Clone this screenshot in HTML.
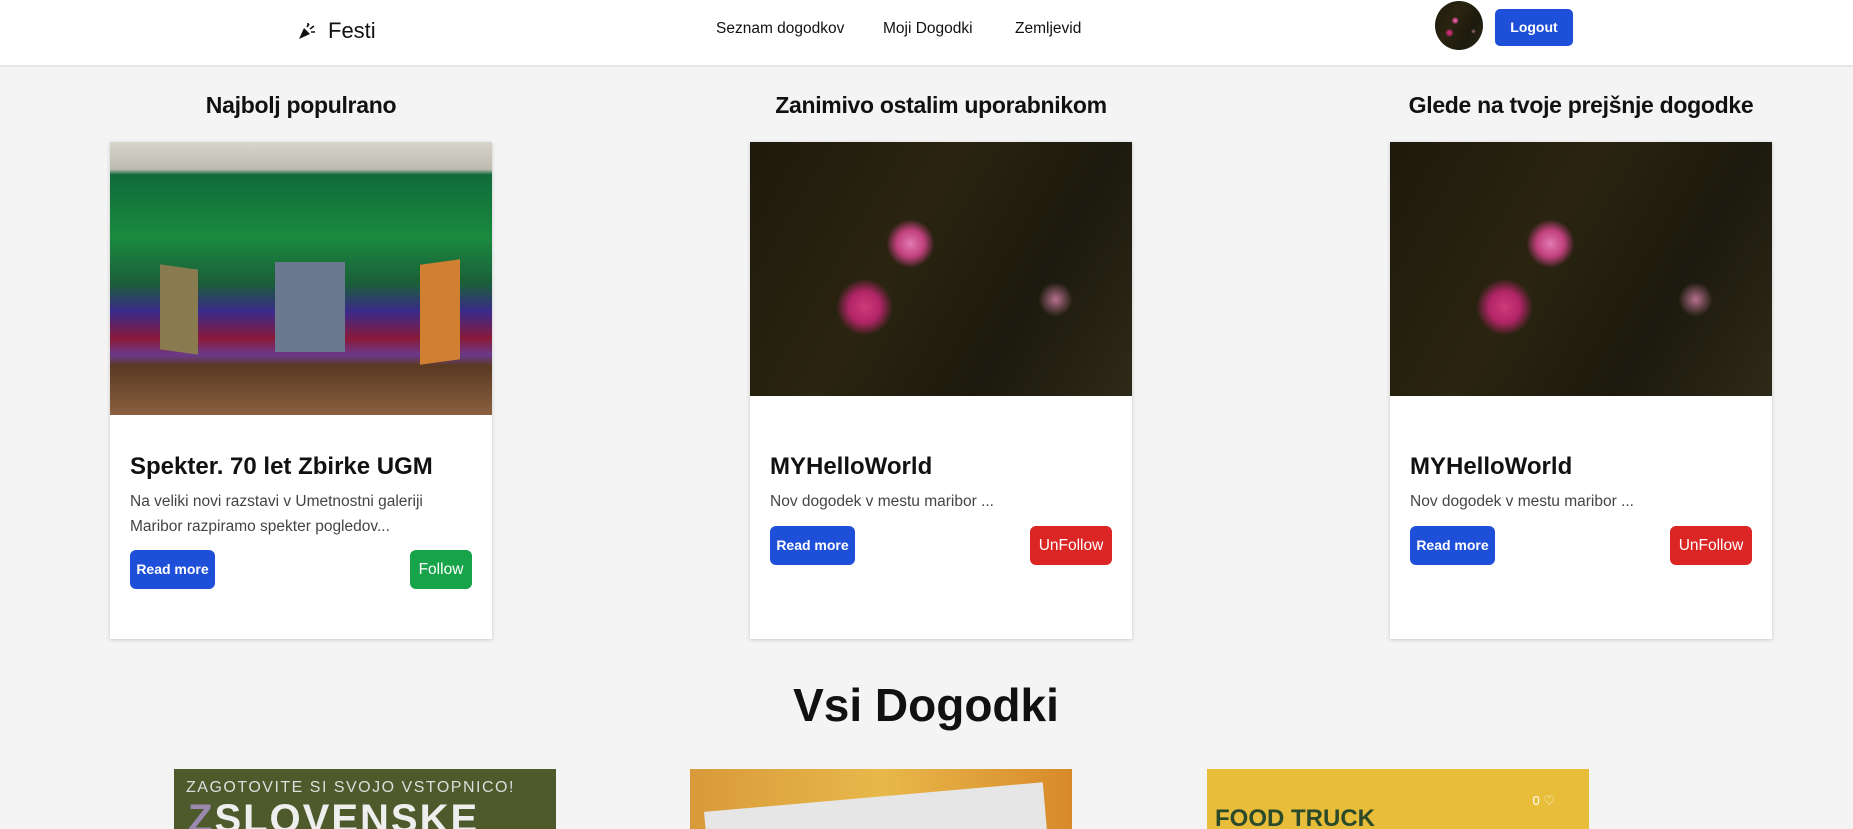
<!DOCTYPE html>
<html><head><meta charset="utf-8"><style>
*{box-sizing:border-box;margin:0;padding:0}
html,body{width:1853px;height:829px;overflow:hidden}
body{background:#f4f4f4;font-family:"Liberation Sans",sans-serif;position:relative;color:#111}
.nav{position:absolute;left:0;top:0;width:1853px;height:67px;background:#fff;border-bottom:2px solid #e6e6e6}
.a{position:absolute}
.h2{position:absolute;top:92px;font-weight:bold;font-size:23px;transform:translateX(-50%);white-space:nowrap;letter-spacing:-0.3px}
.card{position:absolute;top:142px;width:382px;height:497px;background:#fff;box-shadow:0 1px 4px rgba(0,0,0,.18);overflow:hidden}
.img{width:100%;position:relative;overflow:hidden}
.t{position:absolute;left:20px;top:311px;font-size:24px;font-weight:bold;color:#111;white-space:nowrap}
.d{position:absolute;left:20px;font-size:15.5px;line-height:25px;color:#444;width:310px}
.btn{position:absolute;color:#fff;border-radius:6px;font-size:14px;text-align:center;line-height:39px;height:39px}
.rm{background:#1e4fd8;font-weight:bold;width:85px;left:20px}
.fl{background:#17a34a;width:62px;right:20px;font-size:15.5px}
.uf{background:#dc2626;width:82px;right:20px;font-size:15.5px}
.flower{background:radial-gradient(circle at 42% 40%,#e07ab0 0,#c2407e 5%,transparent 9%),radial-gradient(circle at 30% 65%,#d13a7a 0,#b02566 5%,transparent 9%),radial-gradient(circle at 80% 62%,#b7718e 0,transparent 5%),linear-gradient(120deg,#1e1a0c,#2a2410 40%,#1c1a0e 70%,#2e2a18);}
</style></head><body>
<div class="nav">
 <svg class="a" style="left:298px;top:22px" width="18" height="18" viewBox="0 0 18 18"><path d="M1 17 L6 6 L12 12 Z" fill="#111"/><path d="M9 5 L11 2 M12 7 L16 4 M13 10 L17 10 M10 1 L10 3" stroke="#111" stroke-width="1.6" fill="none"/></svg>
 <div class="a" style="left:328px;top:18px;font-size:22px;color:#111">Festi</div>
 <div class="a" style="left:716px;top:20px;font-size:15.5px">Seznam dogodkov</div>
 <div class="a" style="left:883px;top:20px;font-size:15.5px">Moji Dogodki</div>
 <div class="a" style="left:1015px;top:20px;font-size:15.5px">Zemljevid</div>
 <div class="a flower" style="left:1435px;top:1px;width:48px;height:49px;border-radius:50%"></div>
 <div class="a" style="left:1495px;top:9px;width:78px;height:37px;background:#1e4fd8;border-radius:5px;color:#fff;font-weight:bold;font-size:14px;text-align:center;line-height:37px">Logout</div>
</div>
<div class="h2" style="left:301px">Najbolj populrano</div>
<div class="h2" style="left:941px">Zanimivo ostalim uporabnikom</div>
<div class="h2" style="left:1581px">Glede na tvoje prejšnje dogodke</div>

<div class="card" style="left:110px">
 <div class="img" style="height:273px;background:linear-gradient(180deg,#d8d6cc 0,#bdbab0 10%,#0f6b3a 12%,#1a8a3e 35%,#1b5e3a 52%,#3a2a8a 62%,#8a1a3a 72%,#6a3a8a 78%,#5a3a22 82%,#8a6040 100%)">
  <div style="position:absolute;left:165px;top:120px;width:70px;height:90px;background:#6a7890"></div>
  <div style="position:absolute;left:50px;top:125px;width:38px;height:85px;background:#8a7a50;transform:skewY(8deg)"></div>
  <div style="position:absolute;left:310px;top:120px;width:40px;height:100px;background:#d08030;transform:skewY(-8deg)"></div>
 </div>
 <div class="t">Spekter. 70 let Zbirke UGM</div>
 <div class="d" style="top:347px">Na veliki novi razstavi v Umetnostni galeriji Maribor razpiramo spekter pogledov...</div>
 <div class="btn rm" style="top:408px">Read more</div>
 <div class="btn fl" style="top:408px">Follow</div>
</div>
<div class="card" style="left:750px">
 <div class="img flower" style="height:254px"></div>
 <div class="t">MYHelloWorld</div>
 <div class="d" style="top:347px">Nov dogodek v mestu maribor ...</div>
 <div class="btn rm" style="top:384px">Read more</div>
 <div class="btn uf" style="top:384px">UnFollow</div>
</div>
<div class="card" style="left:1390px">
 <div class="img flower" style="height:254px"></div>
 <div class="t">MYHelloWorld</div>
 <div class="d" style="top:347px">Nov dogodek v mestu maribor ...</div>
 <div class="btn rm" style="top:384px">Read more</div>
 <div class="btn uf" style="top:384px">UnFollow</div>
</div>

<div class="a" style="left:926px;top:678px;transform:translateX(-50%);font-size:46px;font-weight:bold;white-space:nowrap">Vsi Dogodki</div>

<div class="a" style="left:174px;top:769px;width:382px;height:60px;background:#4f5a2c;overflow:hidden">
 <div style="color:#ddd;font-size:16px;letter-spacing:1.5px;margin:10px 0 0 12px;white-space:nowrap">ZAGOTOVITE SI SVOJO VSTOPNICO!</div>
 <div style="color:#eee;font-size:40px;font-weight:bold;margin:0 0 0 14px;letter-spacing:2px;white-space:nowrap"><span style="color:#9a8ab0">Z</span>SLOVENSKE</div>
</div>
<div class="a" style="left:690px;top:769px;width:382px;height:60px;background:linear-gradient(90deg,#d89a3a,#e8b84a 50%,#d88a2a);overflow:hidden">
 <div style="position:absolute;left:16px;top:28px;width:340px;height:60px;background:#e6e6e6;transform:rotate(-5deg)"></div>
</div>
<div class="a" style="left:1207px;top:769px;width:382px;height:60px;background:#e8bd3a;overflow:hidden">
 <div style="position:absolute;left:8px;top:36px;font-size:24px;font-weight:bold;color:#2a4a2a;white-space:nowrap">FOOD TRUCK</div>
 <div style="position:absolute;right:34px;top:24px;color:#fff;font-size:13px">0 ♡</div>
</div>
</body></html>
